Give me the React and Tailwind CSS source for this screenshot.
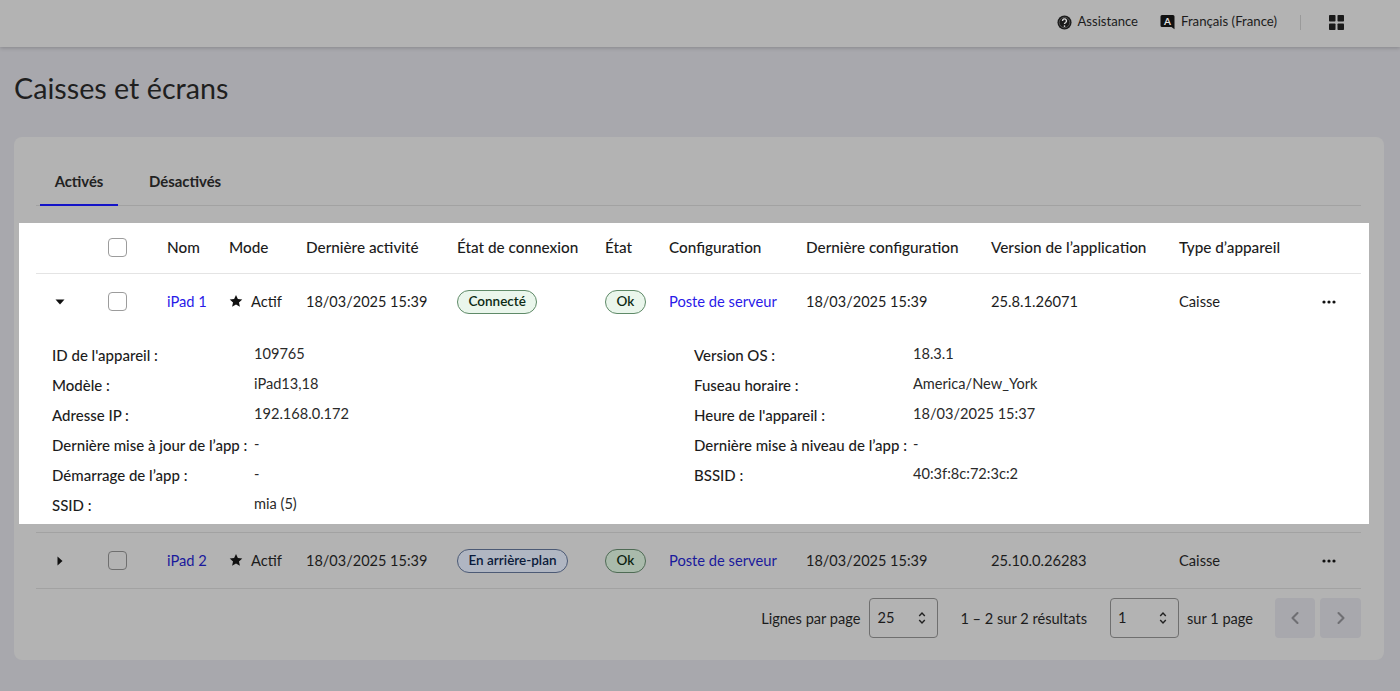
import React from "react";
import { ChevronLeft, ChevronRight } from "lucide-react";

const cols = "grid grid-cols-[72px_59px_62px_77px_151px_148px_64px_137px_185px_188px_1fr_auto] items-center";

const headers = [
  "Nom",
  "Mode",
  "Dernière activité",
  "État de connexion",
  "État",
  "Configuration",
  "Dernière configuration",
  "Version de l’application",
  "Type d’appareil",
];

const leftDetails = [
  ["ID de l'appareil :", "109765"],
  ["Modèle :", "iPad13,18"],
  ["Adresse IP :", "192.168.0.172"],
  ["Dernière mise à jour de l’app :", "-"],
  ["Démarrage de l’app :", "-"],
  ["SSID :", "mia (5)"],
];

const rightDetails = [
  ["Version OS :", "18.3.1"],
  ["Fuseau horaire :", "America/New_York"],
  ["Heure de l'appareil :", "18/03/2025 15:37"],
  ["Dernière mise à niveau de l’app :", "-"],
  ["BSSID :", "40:3f:8c:72:3c:2"],
];

function Checkbox({ dim }) {
  return (
    <span
      className={
        "block h-[19px] w-[19px] rounded-[4px] border " +
        (dim ? "border-[#6f6f6f]" : "border-[#9c9c9c] bg-white")
      }
    />
  );
}

function Star() {
  return (
    <svg width="14" height="14" viewBox="0 0 24 24" className="shrink-0" fill="#111">
      <path d="M12 1.5l3.2 7 7.6.8-5.7 5.1 1.6 7.5L12 18.1l-6.7 3.8 1.6-7.5L1.2 9.3l7.6-.8z" />
    </svg>
  );
}

function Dots() {
  return (
    <svg width="14" height="4" viewBox="0 0 14 4" fill="#111">
      <circle cx="2" cy="2" r="1.6" />
      <circle cx="7" cy="2" r="1.6" />
      <circle cx="12" cy="2" r="1.6" />
    </svg>
  );
}

function Pill({ children, className }) {
  return (
    <span
      className={
        "inline-flex h-6 items-center rounded-full border px-[10.5px] text-[13.5px] font-semibold " + className
      }
    >
      {children}
    </span>
  );
}

function Row({ open, dim, name, version, connection }) {
  const link = dim ? "text-[#1a1a9c]" : "text-[#2a1ae8]";
  return (
    <div className={cols + " h-[55px] text-[14.7px] text-[#1c1c1c]"}>
      <div className="pl-[19px]">
        {open ? (
          <svg width="10" height="6" viewBox="0 0 10 6" fill="#111">
            <path d="M0.5 0.5h9L5 5.5z" />
          </svg>
        ) : (
          <svg width="6" height="10" viewBox="0 0 6 10" fill="#111" className="ml-[2px]">
            <path d="M0.5 0.5v9L5.5 5z" />
          </svg>
        )}
      </div>
      <Checkbox dim={dim} />
      <span className={link}>{name}</span>
      <span className="flex items-center gap-[8px]">
        <Star />
        Actif
      </span>
      <span className="text-[14.5px]">18/03/2025 15:39</span>
      <span>{connection}</span>
      <span>
        <Pill
          className={
            dim
              ? "border-[#4f6b55] bg-[#a9baab] text-[#0c1f10]"
              : "border-[#5f8a68] bg-[#eaf6ec] text-[#0c2a14]"
          }
        >
          Ok
        </Pill>
      </span>
      <span className={link + " whitespace-nowrap"}>Poste de serveur</span>
      <span className="text-[14.5px]">18/03/2025 15:39</span>
      <span>{version}</span>
      <span>Caisse</span>
      <span className="flex justify-end pr-[25px]">
        <Dots />
      </span>
    </div>
  );
}

function DetailList({ items, labelWidth }) {
  return (
    <div className="flex flex-col">
      {items.map(([label, value]) => (
        <div key={label} className={"grid h-[30px] items-center " + labelWidth}>
          <span className="whitespace-nowrap pt-[2px] text-[15px] font-medium text-[#1c1c1c]">{label}</span>
          <span className="text-[14.6px] text-[#2a2a2a]">{value}</span>
        </div>
      ))}
    </div>
  );
}

function Select({ value }) {
  return (
    <div className="flex h-10 w-[69px] items-center justify-between rounded-[4px] border border-[#6f6f6f] pl-[7px] pr-[11px]">
      <span>{value}</span>
      <svg width="8" height="14" viewBox="0 0 8 14" fill="none" stroke="#222" strokeWidth="1.4">
        <path d="M1.2 5L4 2l2.8 3M1.2 9L4 12l2.8-3" />
      </svg>
    </div>
  );
}

export default function App() {
  return (
    <div className="min-h-[691px] bg-[#a8a8ad] font-['Lato','Open_Sans',sans-serif] text-[14.6px] text-[#1c1c1c]">
      <header className="flex h-[47px] items-center justify-end bg-[#b3b3b3] pb-[3px] pr-[56px] shadow-[0_1px_4px_rgba(0,0,0,0.2)]">
        <svg width="15" height="15" viewBox="0 0 16 16" className="mr-[5px]">
          <circle cx="8" cy="8" r="7.5" fill="#1a1a1a" />
          <circle cx="8" cy="8" r="5.6" fill="none" stroke="#8a8a8a" strokeWidth="0.5" />
          <path d="M5.9 6.3a2.1 2.1 0 1 1 3.3 1.7c-.8.5-1.2.9-1.2 1.7" fill="none" stroke="#d8d8d8" strokeWidth="1.5" />
          <circle cx="8" cy="11.8" r="0.9" fill="#d8d8d8" />
        </svg>
        <span className="text-[13.1px]">Assistance</span>
        <svg width="15" height="16" viewBox="0 0 15 16" className="ml-[22px] mr-[6px]">
          <path d="M2 1h11a1.5 1.5 0 0 1 1.5 1.5v12.8L11.5 13H2A1.5 1.5 0 0 1 .5 11.5v-9A1.5 1.5 0 0 1 2 1z" fill="#111" />
          <text x="7.5" y="10.8" textAnchor="middle" fontSize="10" fontWeight="700" fill="#ddd" fontFamily="Lato">
            A
          </text>
        </svg>
        <span className="text-[13.2px]">Français (France)</span>
        <span className="ml-[23px] mr-[28px] h-[15px] w-px bg-[#9a9a9a]" />
        <svg width="15" height="15" viewBox="0 0 15 15" fill="#1a1a1a">
          <rect width="6.5" height="6.5" rx="0.8" />
          <rect x="8.5" width="6.5" height="6.5" rx="0.8" />
          <rect y="8.5" width="6.5" height="6.5" rx="0.8" />
          <rect x="8.5" y="8.5" width="6.5" height="6.5" rx="0.8" />
        </svg>
      </header>

      <h1 className="ml-[14px] flex h-[90px] items-center pb-[6px] text-[28.7px] font-normal text-[#1f1f1f]">
        Caisses et écrans
      </h1>

      <main className="ml-[14px] h-[523px] w-[1370px] rounded-[8px] bg-[#b3b3b3]">
        <div className="ml-[22px] mr-[23px] flex h-[69px] items-end border-b border-[#a2a2a2] pl-[4px]">
          <div className="-mb-px flex h-[36px] w-[78px] justify-center border-b-2 border-[#1414c8] text-[14.8px] font-bold text-[#222]">
            Activés
          </div>
          <div className="-mb-px ml-[31px] flex h-[36px] text-[14.9px] font-bold text-[#222]">Désactivés</div>
        </div>

        <section className="ml-[5px] mr-[15px] mt-[17px] h-[301px] bg-white pl-[17px] pr-[8px]">
          <div className={cols + " h-[51px] border-b border-[#e4e4e4] pb-[2px] text-[15.3px] font-medium"}>
            <span />
            <Checkbox />
            {headers.map((h) => (
              <span key={h} className="whitespace-nowrap">
                {h}
              </span>
            ))}
          </div>
          <Row
            open
            name="iPad 1"
            version="25.8.1.26071"
            connection={<Pill className="border-[#5f8a68] bg-[#eaf6ec] text-[#0c2a14]">Connecté</Pill>}
          />
          <div className="grid grid-cols-[642px_1fr] pl-[16px] pt-[10px]">
            <DetailList items={leftDetails} labelWidth="grid-cols-[202px_1fr]" />
            <DetailList items={rightDetails} labelWidth="grid-cols-[219px_1fr]" />
          </div>
        </section>

        <div className="ml-[22px] mr-[23px] mt-[8px] border-y border-[#a2a2a2]">
          <Row
            dim
            name="iPad 2"
            version="25.10.0.26283"
            connection={
              <Pill className="border-[#4c5a75] bg-[#b0b6c2] text-[#0a1a3a]">En arrière-plan</Pill>
            }
          />
        </div>

        <div className="mr-[23px] mt-[9px] flex h-10 items-center justify-end">
          <span className="mr-[9px] pt-[2px]">Lignes par page</span>
          <Select value="25" />
          <span className="ml-[22px] mr-[23px] pt-[2px]">1 – 2 sur 2 résultats</span>
          <Select value="1" />
          <span className="ml-[8px] pt-[2px]">sur 1 page</span>
          <button className="ml-[22px] flex h-10 w-10 items-center justify-center rounded-[4px] bg-[#a8a8ad] text-[#6f6f73]">
            <ChevronLeft size={20} strokeWidth={2.5} />
          </button>
          <button className="ml-[5px] flex h-10 w-[41px] items-center justify-center rounded-[4px] bg-[#a8a8ad] text-[#6f6f73]">
            <ChevronRight size={20} strokeWidth={2.5} />
          </button>
        </div>
      </main>
    </div>
  );
}
